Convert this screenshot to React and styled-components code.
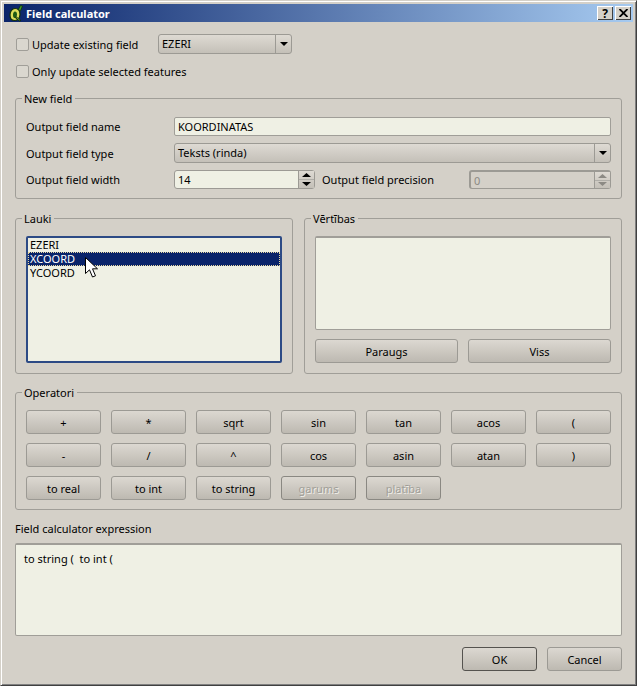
import styled, { createGlobalStyle } from "styled-components";

const field_rows = ["EZERI", "XCOORD", "YCOORD"];
const operators = [
  ["+", "*", "sqrt", "sin", "tan", "acos", "("],
  ["-", "/", "^", "cos", "asin", "atan", ")"],
  ["to real", "to int", "to string", "garums", "platība"],
];
const disabled_ops = ["garums", "platība"];

const QgisLogo = () => (
  <svg width="14" height="17" viewBox="0 0 14 17">
    <path d="M9 5L11.500 0.500L13.500 1L11.500 6z" fill="#3f9a24" stroke="#12300a" strokeWidth="0.800" />
    <path d="M6 3.500C3 3.500 1 6.500 1 10s1.800 5.500 4.500 5.500S11 13 11 9.500 9 3.500 6 3.500z" fill="#dcdc5a" stroke="#12300a" strokeWidth="1.200" />
    <path d="M6 6.500C4.800 6.500 4 8 4 10s.6 3 1.600 3S8 11.500 8 9.500 7.200 6.500 6 6.500z" fill="#1d5a14" />
    <path d="M6.500 12l5 4" stroke="#12300a" strokeWidth="2" />
    <path d="M7.500 12.500l3 2.500" stroke="#9ad040" strokeWidth="0.800" />
  </svg>
);

const Arrow = ({ up, color = "#000", width = 7, height = 4 }) => (
  <svg width={width} height={height} viewBox={`0 0 ${width} ${height}`}>
    <path d={up ? `M0 ${height}L${width / 2} 0L${width} ${height}z` : `M0 0L${width} 0L${width / 2} ${height}z`} fill={color} />
  </svg>
);

const Combo = ({ value, width }) => (
  <ComboBox $width={width}>
    <ComboText>{value}</ComboText>
    <ComboDrop>
      <Arrow width={8} />
    </ComboDrop>
  </ComboBox>
);

const Spinner = ({ value, width, disabled }) => (
  <SpinBox $width={width} $disabled={disabled}>
    <SpinText $disabled={disabled}>{value}</SpinText>
    <SpinArrows>
      <SpinPart>
        <Arrow up width={9} color={disabled ? "#8c8a84" : "#000"} />
      </SpinPart>
      <SpinPart>
        <Arrow width={9} color={disabled ? "#8c8a84" : "#000"} />
      </SpinPart>
    </SpinArrows>
  </SpinBox>
);

const App = () => {
  return (
    <Window>
      <GlobalStyle />
      <TitleBar>
        <QgisLogo />
        <TitleText>Field calculator</TitleText>
        <TitleButton>?</TitleButton>
        <TitleButton>
          <svg width="9" height="8" viewBox="0 0 9 8">
            <path d="M0.500 0L8.500 8M8.500 0L0.500 8" stroke="#000" strokeWidth="1.800" />
          </svg>
        </TitleButton>
      </TitleBar>
      <Content>
        <CheckRow>
          <CheckBox />
          <CheckLabel $width="126px">Update existing field</CheckLabel>
          <Combo value="EZERI" width="134px" />
        </CheckRow>
        <CheckRow>
          <CheckBox />
          <CheckLabel>Only update selected features</CheckLabel>
        </CheckRow>

        <NewFieldGroup>
          <Legend>New field</Legend>
          <FormRow>
            <FormLabel>Output field name</FormLabel>
            <TextInput>KOORDINATAS</TextInput>
          </FormRow>
          <FormRow>
            <FormLabel>Output field type</FormLabel>
            <Combo value="Teksts (rinda)" />
          </FormRow>
          <FormRow>
            <FormLabel>Output field width</FormLabel>
            <Spinner value="14" width="141px" />
            <PrecisionLabel>Output field precision</PrecisionLabel>
            <Spinner value="0" width="142px" disabled />
          </FormRow>
        </NewFieldGroup>

        <Columns>
          <Group>
            <Legend>Lauki</Legend>
            <FieldList>
              {field_rows.map((name, index) => (
                <FieldRow key={name} $selected={index === 1}>
                  {name}
                </FieldRow>
              ))}
              <Cursor width="13" height="21" viewBox="0 0 13 21">
                <path d="M0.500 0.500V16.500L4.500 12.800L7.500 20L10.500 18.800L7.500 11.800H12.500z" fill="#fff" stroke="#000" />
              </Cursor>
            </FieldList>
          </Group>
          <Group>
            <Legend>Vērtības</Legend>
            <ValuesList />
            <ValuesButtons>
              <PushButton>Paraugs</PushButton>
              <PushButton>Viss</PushButton>
            </ValuesButtons>
          </Group>
        </Columns>

        <OperatorGroup>
          <Legend>Operatori</Legend>
          <OperatorGrid>
            {operators.flat().map((op) => (
              <PushButton key={op} disabled={disabled_ops.includes(op)}>
                {op}
              </PushButton>
            ))}
          </OperatorGrid>
        </OperatorGroup>

        <ExpressionLabel>Field calculator expression</ExpressionLabel>
        <ExpressionBox>to string (&nbsp; to int (</ExpressionBox>

        <Footer>
          <FooterButton $primary>OK</FooterButton>
          <FooterButton>Cancel</FooterButton>
        </Footer>
      </Content>
    </Window>
  );
};

const GlobalStyle = createGlobalStyle`
  html, body {
    margin: 0;
    padding: 0;
    background: #d4d0c8;
    overflow: hidden;
  }
  * {
    box-sizing: border-box;
  }
  body, button {
    font-family: "Noto Sans", sans-serif;
    font-size: 11px;
    color: #000;
  }
`;

const Window = styled.div`
  width: 637px;
  height: 686px;
  padding: 1px 3px 0 3px;
  background: #d4d0c8;
  border-top: 1px solid #d4d0c8;
  border-left: 1px solid #d4d0c8;
  border-right: 1px solid #404040;
  border-bottom: 1px solid #404040;
  box-shadow: inset 1px 1px 0 #fff, inset -1px -1px 0 #808080;
  display: flex;
  flex-direction: column;
  overflow: hidden;
`;

const TitleBar = styled.div`
  height: 18px;
  flex: none;
  margin-top: 2px;
  padding: 0 2px 0 5px;
  display: flex;
  align-items: center;
  gap: 2px;
  background: linear-gradient(90deg, #0a246a, #a6caf0);
`;

const TitleText = styled.div`
  flex: 1;
  margin-left: 1px;
  color: #fff;
  font-size: 11px;
  font-weight: bold;
`;

const TitleButton = styled.div`
  width: 16px;
  height: 14px;
  display: flex;
  align-items: center;
  justify-content: center;
  background: #d4d0c8;
  font-size: 12px;
  font-weight: bold;
  box-shadow: inset 1px 1px 0 #fff, inset -1px -1px 0 #404040;
`;

const Content = styled.div`
  flex: 1;
  padding: 12px 11px 0 11px;
  display: flex;
  flex-direction: column;
`;

const CheckRow = styled.div`
  height: 20px;
  margin-bottom: 7px;
  display: flex;
  align-items: center;
`;

const CheckBox = styled.div`
  width: 13px;
  height: 13px;
  margin-left: 1px;
  background: #dad7cf;
  border: 1px solid #a09e98;
  border-radius: 2px;
`;

const CheckLabel = styled.div`
  margin-left: 3px;
  width: ${(props) => props.$width || "auto"};
`;

const Group = styled.fieldset`
  margin: 0;
  min-width: 0;
  padding: 10px 10px 10px;
  border: 1px solid #a09e98;
  border-radius: 3px;
`;

const NewFieldGroup = styled(Group)`
  margin-top: 3px;
  padding-top: 11px;
  height: 108px;
  display: flex;
  flex-direction: column;
  gap: 7px;
`;

const Legend = styled.legend`
  margin-left: -4px;
  padding: 0 3px 0 2px;
  height: 15px;
  line-height: 15px;
`;

const FormRow = styled.div`
  display: flex;
  align-items: center;
`;

const FormLabel = styled.div`
  width: 148px;
  flex: none;
`;

const PrecisionLabel = styled.div`
  width: 154px;
  flex: none;
  padding-left: 7px;
`;

const TextInput = styled.div`
  flex: 1;
  height: 19px;
  padding: 0 3px;
  line-height: 17px;
  background: #eff0e4;
  border: 1px solid #a09e98;
  border-radius: 2px;
`;

const ComboBox = styled.div`
  width: ${(props) => props.$width || "auto"};
  flex: ${(props) => (props.$width ? "none" : 1)};
  height: 20px;
  display: flex;
  background: linear-gradient(#dedad3, #c4c0b8);
  border: 1px solid #9c9a94;
  border-radius: 3px;
`;

const ComboText = styled.div`
  flex: 1;
  padding-left: 3px;
  line-height: 18px;
`;

const ComboDrop = styled.div`
  width: 16px;
  display: flex;
  align-items: center;
  justify-content: center;
  border-left: 1px solid #9c9a94;
`;

const SpinBox = styled.div`
  width: ${(props) => props.$width};
  flex: none;
  height: 19px;
  display: flex;
  background: ${(props) => (props.$disabled ? "#d4d0c8" : "#eff0e4")};
  border: 1px solid #9c9a94;
  border-top-width: ${(props) => (props.$disabled ? "2px" : "1px")};
  border-left-width: ${(props) => (props.$disabled ? "2px" : "1px")};
  border-radius: 3px;
`;

const SpinText = styled.div`
  flex: 1;
  padding-left: 3px;
  line-height: 17px;
  color: ${(props) => (props.$disabled ? "#8c8a84" : "#000")};
`;

const SpinArrows = styled.div`
  width: 16px;
  display: flex;
  flex-direction: column;
  border-left: 1px solid #9c9a94;
  background: linear-gradient(#dedad3, #c4c0b8);
`;

const SpinPart = styled.div`
  flex: 1;
  display: flex;
  align-items: center;
  justify-content: center;
  &:first-child {
    border-bottom: 1px solid #b0aea8;
  }
`;

const Columns = styled.div`
  margin-top: 12px;
  display: grid;
  grid-template-columns: 278px 318px;
  gap: 11px;
`;

const FieldList = styled.div`
  position: relative;
  height: 127px;
  background: #eff0e4;
  border: 2px solid #2c4a85;
  border-radius: 2px;
`;

const FieldRow = styled.div`
  height: 14px;
  line-height: 14px;
  padding-left: 2px;
  color: ${(props) => (props.$selected ? "#fff" : "#000")};
  background: ${(props) => (props.$selected ? "#0a246a" : "transparent")};
  outline: ${(props) => (props.$selected ? "1px dotted #e8d8a0" : "none")};
  outline-offset: -1px;
`;

const Cursor = styled.svg`
  position: absolute;
  left: 57px;
  top: 19px;
`;

const ValuesList = styled.div`
  height: 94px;
  background: #eff0e4;
  border: 1px solid #a09e98;
  border-top: 2px solid #a09e98;
  border-radius: 2px;
`;

const ValuesButtons = styled.div`
  margin-top: 9px;
  display: grid;
  grid-template-columns: 143px 143px;
  gap: 10px;
`;

const PushButton = styled.button`
  height: 24px;
  padding: 0;
  background: linear-gradient(#dcd8d1, #bdb9b1);
  border: 1px solid ${(props) => (props.disabled ? "#8a8882" : "#9c9a94")};
  border-radius: 3px;
  color: ${(props) => (props.disabled ? "#a09e98" : "#000")};
  text-shadow: ${(props) => (props.disabled ? "1px 1px 0 #f0eee8" : "none")};
`;

const OperatorGroup = styled(Group)`
  margin-top: 11px;
  height: 125px;
`;

const OperatorGrid = styled.div`
  display: grid;
  grid-template-columns: repeat(7, 75px);
  grid-auto-rows: 24px;
  gap: 9px 10px;
`;

const ExpressionLabel = styled.div`
  margin-top: 12px;
  height: 14px;
  line-height: 14px;
`;

const ExpressionBox = styled.div`
  margin-top: 7px;
  height: 93px;
  padding: 6px 8px;
  background: #eff0e4;
  border: 1px solid #a09e98;
  border-top: 2px solid #a09e98;
  border-radius: 2px;
`;

const Footer = styled.div`
  margin-top: 11px;
  display: flex;
  justify-content: flex-end;
  gap: 10px;
`;

const FooterButton = styled(PushButton)`
  width: 75px;
  border-color: ${(props) => (props.$primary ? "#55534f" : "#9c9a94")};
`;

export default App;
